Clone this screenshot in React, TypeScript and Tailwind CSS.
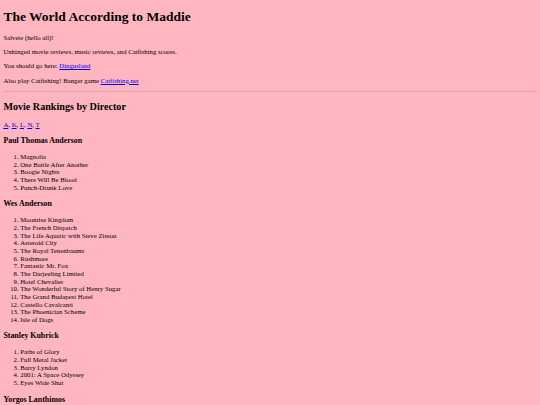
import React from "react";

// Plain hand-written page, sized as a 1280px-wide page shown at 540px (x0.421875).

type Director = { name: string; films: string[] };

const directors: Director[] = [
  {
    name: "Paul Thomas Anderson",
    films: [
      "Magnolia",
      "One Battle After Another",
      "Boogie Nights",
      "There Will Be Blood",
      "Punch-Drunk Love",
    ],
  },
  {
    name: "Wes Anderson",
    films: [
      "Moonrise Kingdom",
      "The French Dispatch",
      "The Life Aquatic with Steve Zissou",
      "Asteroid City",
      "The Royal Tenenbaums",
      "Rushmore",
      "Fantastic Mr. Fox",
      "The Darjeeling Limited",
      "Hotel Chevalier",
      "The Wonderful Story of Henry Sugar",
      "The Grand Budapest Hotel",
      "Castello Cavalcanti",
      "The Phoenician Scheme",
      "Isle of Dogs",
    ],
  },
  {
    name: "Stanley Kubrick",
    films: [
      "Paths of Glory",
      "Full Metal Jacket",
      "Barry Lyndon",
      "2001: A Space Odyssey",
      "Eyes Wide Shut",
    ],
  },
  {
    name: "Yorgos Lanthimos",
    films: ["The Favourite", "Poor Things", "The Lobster", "Bugonia", "Kinds of Kindness"],
  },
];

const letters = ["A", "K", "L", "N", "T"];

function Link({ children }: { children: React.ReactNode }) {
  return <a href="#" className="text-[#0000EE] underline">{children}</a>;
}

export default function App() {
  return (
    <div
      className="min-h-screen overflow-hidden bg-[#FFB6C1] px-[3.375px] text-[6.75px] leading-[7.65px] text-black"
      style={{ fontFamily: '"Liberation Serif", "Times New Roman", serif' }}
    >
      <h1 className="mt-[9.05px] mb-[9.05px] text-[13.5px] leading-[15.5px] font-bold">
        The World According to Maddie
      </h1>
      <p className="my-[6.75px]">Salvete (hello all)!</p>
      <p className="my-[6.75px]">Unhinged movie reviews, music reviews, and Catfishing scores.</p>
      <p className="my-[6.75px]">
        You should go here: <Link>Dingusland</Link>
      </p>
      <p className="my-[6.75px]">
        Also play Catfishing! Banger game <Link>Catfishing.net</Link>
      </p>
      <hr className="my-[3.375px] border-t border-[#d8a6b0]" />

      <h2 className="my-[8.4px] text-[10.125px] leading-[11.6px] font-bold">Movie Rankings by Director</h2>
      <p className="my-[6.75px]">
        {letters.map((l, i) => (
          <span key={l}>
            <Link>{l}</Link>
            {i < letters.length - 1 ? ", " : ""}
          </span>
        ))}
      </p>

      {directors.map((d) => (
        <section key={d.name}>
          <h3 className="my-[7.9px] text-[7.9px] leading-[9.1px] font-bold">{d.name}</h3>
          <ol className="my-[6.75px] list-decimal pl-[16.875px]">
            {d.films.map((f) => (
              <li key={f}>{f}</li>
            ))}
          </ol>
        </section>
      ))}
    </div>
  );
}
